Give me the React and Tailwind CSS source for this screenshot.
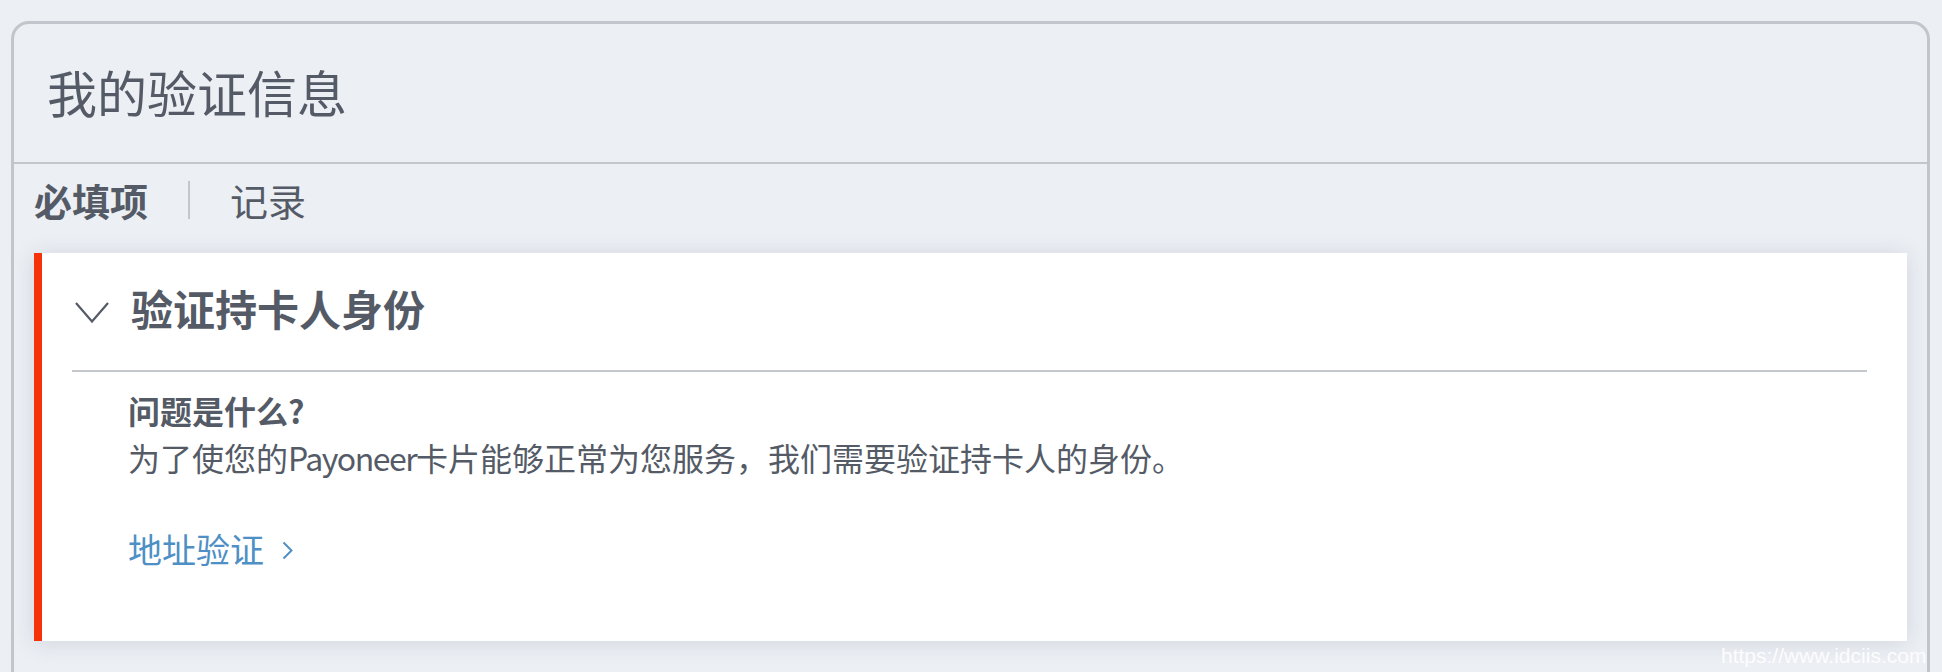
export default function App() {
  return (
    <div className="relative h-[672px] overflow-hidden bg-[#eceff4] pt-[21px] pl-[11px] pr-[12px] font-['Noto_Sans_CJK_SC',sans-serif] text-[#545b66]">
      <div className="h-[720px] rounded-t-[18px] border-[3px] border-[#c2c5cb] bg-[#eceff4]">
        <div className="flex h-[140px] items-center border-b-2 border-[#c3c6cc] pl-[33px] pb-[5px]">
          <h1 className="text-[50px] leading-none font-normal text-[#555b66]">我的验证信息</h1>
        </div>
        <div className="px-[20px]">
          <div className="flex items-center pt-[17px]">
            <span className="text-[38px] leading-[38px] font-bold">必填项</span>
            <span className="ml-[40px] mr-[40px] h-[38px] w-[2px] bg-[#c3c6cb]"></span>
            <span className="text-[38px] leading-[38px] font-normal">记录</span>
          </div>
          <div className="mt-[34px] flex flex-col border-l-8 border-[#f5330b] bg-white pl-[30px] pr-[40px] shadow-[0_2px_22px_rgba(40,50,70,0.13)]">
            <div className="flex h-[119px] items-center border-b-2 border-[#c4c7cc] pb-[8px]">
              <svg className="ml-[3px] mt-[9px]" width="34" height="21" viewBox="0 0 34 21" fill="none">
                <polyline points="1,1 17,19.5 33,1" stroke="#545b66" strokeWidth="2.2" />
              </svg>
              <h2 className="ml-[22px] text-[42px] leading-none font-bold">验证持卡人身份</h2>
            </div>
            <div className="pl-[56px] pt-[15px] pb-[69px]">
              <p className="text-[32px] leading-[47px] font-bold">问题是什么?</p>
              <p className="text-[32px] leading-[47px] font-normal">
                为了使您的<span className="tracking-[-1.5px]">Payoneer</span>卡片能够正常为您服务，我们需要验证持卡人的身份。
              </p>
              <a className="mt-[44px] flex items-center text-[34px] leading-[47px] text-[#4e8fc5]">
                <span>地址验证</span>
                <svg className="ml-[18px] mt-[4px]" width="11" height="19" viewBox="0 0 11 19" fill="none">
                  <polyline points="1.5,1.5 9.5,9.5 1.5,17.5" stroke="#4e8fc5" strokeWidth="2" />
                </svg>
              </a>
            </div>
          </div>
        </div>
      </div>
      <div className="absolute left-[1721px] top-[645px] font-['Liberation_Sans',Arial,sans-serif] text-[21px] leading-[21px] whitespace-nowrap text-white/85">
        https://www.idciis.com
      </div>
    </div>
  );
}
